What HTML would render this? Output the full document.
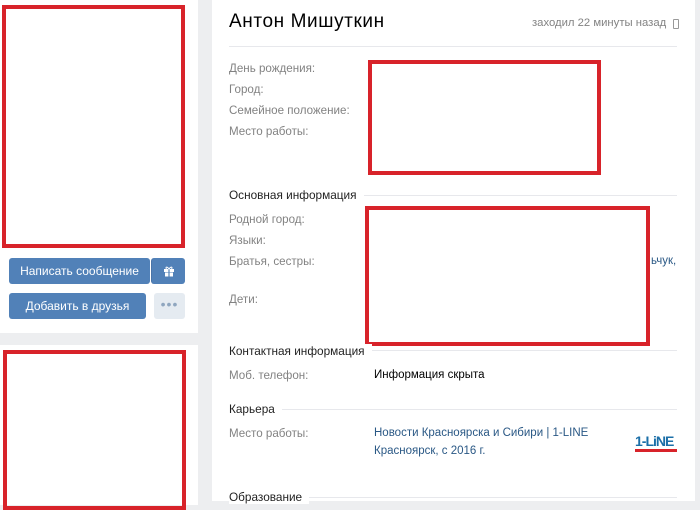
<!DOCTYPE html>
<html><head><meta charset="utf-8"><style>
*{margin:0;padding:0;box-sizing:border-box}
body{width:700px;height:501px;overflow:hidden;background:#edeef0;font-family:"Liberation Sans","DejaVu Sans",sans-serif;position:relative}
.a{position:absolute}
.card{background:#fff}
.red{position:absolute;border:4px solid #d8232a}
.lb{position:absolute;left:229px;font-size:11.6px;color:#828282;white-space:nowrap}
.v{position:absolute;font-size:11.5px;color:#000;white-space:nowrap}
.h{position:absolute;left:229px;font-size:11.8px;color:#222;background:#fff;padding-right:7px;white-space:nowrap}
.ln{position:absolute;left:229px;width:448px;height:1px;background:#e7e8ec}
.btn{position:absolute;background:#5181b8;color:#fff;font-size:12px;text-align:center;border-radius:3px;line-height:26px}
</style></head><body>
<div class="a card" style="left:0;top:0;width:198px;height:333px"></div>
<div class="a card" style="left:0;top:345px;width:198px;height:160px"></div>
<div class="a card" style="left:212px;top:0;width:483px;height:501px"></div>
<div class="red" style="left:2px;top:5px;width:183px;height:243px"></div>
<div class="red" style="left:3px;top:350px;width:183px;height:160px"></div>

<div class="btn" style="left:9px;top:258px;width:141px">Написать сообщение</div>
<div class="btn" style="left:151px;top:258px;width:34px;border-left:1px solid #4a74a8">
<svg width="12" height="12" viewBox="0 0 12 12" style="vertical-align:-2px"><rect x="1" y="4" width="10" height="3" fill="#fff"/><rect x="2" y="7.5" width="8" height="4" fill="#fff"/><rect x="5.4" y="4" width="1.2" height="8" fill="#5181b8"/><path d="M6 4C4 1 2 2 3.5 4M6 4C8 1 10 2 8.5 4" stroke="#fff" fill="none"/></svg></div>
<div class="btn" style="left:9px;top:293px;width:137px">Добавить в друзья</div>
<div class="a" style="left:154px;top:293px;width:31px;height:26px;background:#e5ebf1;border-radius:3px;color:#8fa6bf;font-size:14px;text-align:center;line-height:22px;letter-spacing:1px">•••</div>

<div class="a" style="left:229px;top:11px;font-size:19px;letter-spacing:0.6px;color:#000">Антон Мишуткин</div>
<div class="a" style="left:532px;top:17px;font-size:11.3px;color:#828282">заходил 22 минуты назад</div>
<div class="a" style="left:673px;top:19px;width:6px;height:10px;border:1px solid #999;border-radius:1px"></div>
<div class="ln" style="top:46px"></div>

<div class="lb" style="top:62px">День рождения:</div>
<div class="lb" style="top:83px">Город:</div>
<div class="lb" style="top:104px">Семейное положение:</div>
<div class="lb" style="top:125px">Место работы:</div>
<div class="red" style="left:368px;top:60px;width:233px;height:115px"></div>

<div class="ln" style="top:195px"></div>
<div class="h" style="top:188px">Основная информация</div>
<div class="lb" style="top:213px">Родной город:</div>
<div class="lb" style="top:234px">Языки:</div>
<div class="lb" style="top:255px">Братья, сестры:</div>
<div class="lb" style="top:293px">Дети:</div>
<div class="red" style="left:365px;top:206px;width:285px;height:140px"></div>
<div class="v" style="left:651px;top:255px;color:#2a5885">ьчук,</div>

<div class="ln" style="top:350px"></div>
<div class="h" style="top:344px">Контактная информация</div>
<div class="lb" style="top:369px">Моб. телефон:</div>
<div class="v" style="left:374px;top:369px">Информация скрыта</div>

<div class="ln" style="top:409px"></div>
<div class="h" style="top:402px">Карьера</div>
<div class="lb" style="top:427px">Место работы:</div>
<div class="v" style="left:374px;top:427px;color:#2a5885">Новости Красноярска и Сибири | 1-LINE</div>
<div class="v" style="left:374px;top:445px;color:#2a5885">Красноярск, с 2016 г.</div>
<div class="a" style="left:635px;top:433px;font-size:14px;font-weight:bold;color:#1b6fa8;letter-spacing:-1px">1-LiNE</div>
<div class="a" style="left:635px;top:449px;width:42px;height:3px;background:#d8232a"></div>

<div class="ln" style="top:497px"></div>
<div class="h" style="top:490px">Образование</div>
</body></html>
